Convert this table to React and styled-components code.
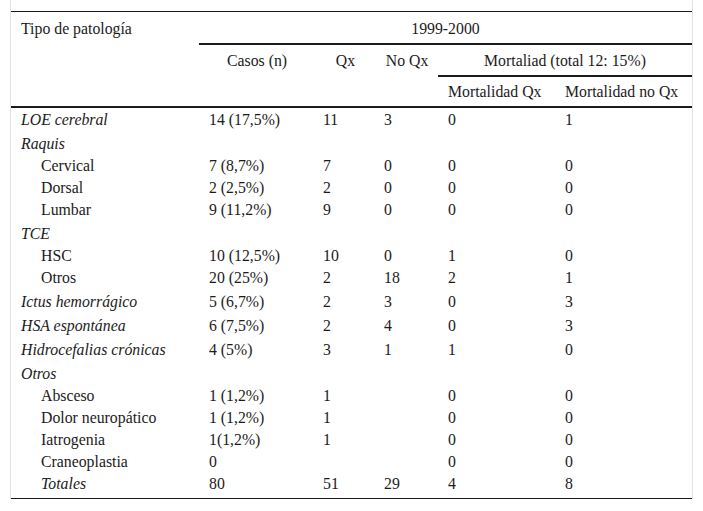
import React from 'react';
import styled, { createGlobalStyle } from 'styled-components';

const GlobalStyle = createGlobalStyle`
  html, body {
    margin: 0;
    padding: 0;
    background: #ffffff;
  }
  body {
    font-family: "Liberation Serif", "Times New Roman", serif;
    color: #1b1b1b;
  }
`;

const Frame = styled.div`
  margin-left: 10px;
  width: 681px;
  padding-top: 11px;
  border-left: 1px solid #e3e3e3;
  border-right: 1px solid #e3e3e3;
`;

const Table = styled.table`
  width: 681px;
  table-layout: fixed;
  border-collapse: separate;
  border-spacing: 0;
  border-top: 1px solid #1b1b1b;
  border-bottom: 1px solid #1b1b1b;
  font-family: "Liberation Serif", "Times New Roman", serif;
  font-size: 15.8px;
  line-height: 18px;
  color: #1b1b1b;
`;

const Head = styled.th`
  font-weight: normal;
  text-align: ${(p) => p.$align || 'center'};
  vertical-align: top;
  padding: ${(p) => p.$pad || '7px 8px 5px 8px'};
  white-space: nowrap;
  border-bottom: ${(p) => (p.$rule ? '2px solid #1b1b1b' : 'none')};
`;

const Cell = styled.td`
  text-align: left;
  vertical-align: top;
  white-space: nowrap;
  font-style: ${(p) => (p.$italic ? 'italic' : 'normal')};
  padding: ${(p) => p.$top}px 4px ${(p) => p.$bottom}px ${(p) => p.$left}px;
`;

const cols = [188, 116, 61, 62, 119, 135];
const pads = [10, 10, 8, 8, 10, 8];

const rows = [
  { label: 'LOE cerebral', cat: true, first: true, v: ['14 (17,5%)', '11', '3', '0', '1'] },
  { label: 'Raquis', cat: true, v: ['', '', '', '', ''] },
  { label: 'Cervical', v: ['7 (8,7%)', '7', '0', '0', '0'] },
  { label: 'Dorsal', v: ['2 (2,5%)', '2', '0', '0', '0'] },
  { label: 'Lumbar', v: ['9 (11,2%)', '9', '0', '0', '0'] },
  { label: 'TCE', cat: true, v: ['', '', '', '', ''] },
  { label: 'HSC', v: ['10 (12,5%)', '10', '0', '1', '0'] },
  { label: 'Otros', v: ['20 (25%)', '2', '18', '2', '1'] },
  { label: 'Ictus hemorrágico', cat: true, v: ['5 (6,7%)', '2', '3', '0', '3'] },
  { label: 'HSA espontánea', cat: true, v: ['6 (7,5%)', '2', '4', '0', '3'] },
  { label: 'Hidrocefalias crónicas', cat: true, v: ['4 (5%)', '3', '1', '1', '0'] },
  { label: 'Otros', cat: true, v: ['', '', '', '', ''] },
  { label: 'Absceso', v: ['1 (1,2%)', '1', '', '0', '0'] },
  { label: 'Dolor neuropático', v: ['1 (1,2%)', '1', '', '0', '0'] },
  { label: 'Iatrogenia', v: ['1(1,2%)', '1', '', '0', '0'] },
  { label: 'Craneoplastia', v: ['0', '', '', '0', '0'] },
  { label: 'Totales', italic: true, last: true, v: ['80', '51', '29', '4', '8'] },
];

const App = () => {
  return (
    <>
      <GlobalStyle />
      <Frame>
        <Table>
          <colgroup>
            {cols.map((w, i) => (
              <col key={i} style={{ width: w }} />
            ))}
          </colgroup>
          <thead>
            <tr>
              <Head rowSpan={3} $align="left" $pad="8px 8px 4px 10px" $rule>
                Tipo de patología
              </Head>
              <Head colSpan={5} $pad="8px 8px 5px 8px" $rule>
                1999-2000
              </Head>
            </tr>
            <tr>
              <Head rowSpan={2} $rule>Casos (n)</Head>
              <Head rowSpan={2} $rule>Qx</Head>
              <Head rowSpan={2} $rule>No Qx</Head>
              <Head colSpan={2} $rule>Mortaliad (total 12: 15%)</Head>
            </tr>
            <tr>
              <Head $align="left" $pad="6px 4px 5px 10px" $rule>
                Mortalidad Qx
              </Head>
              <Head $align="left" $pad="6px 4px 5px 8px" $rule>
                Mortalidad no Qx
              </Head>
            </tr>
          </thead>
          <tbody>
            {rows.map((r, i) => {
              const top = r.cat && !r.first ? 5 : 3;
              const bottom = r.last ? 5 : 1;
              return (
                <tr key={i}>
                  <Cell
                    $italic={r.cat || r.italic}
                    $top={top}
                    $bottom={bottom}
                    $left={r.cat ? 10 : 30}
                  >
                    {r.label}
                  </Cell>
                  {r.v.map((val, j) => (
                    <Cell key={j} $top={top} $bottom={bottom} $left={pads[j + 1]}>
                      {val}
                    </Cell>
                  ))}
                </tr>
              );
            })}
          </tbody>
        </Table>
      </Frame>
    </>
  );
};

export default App;
